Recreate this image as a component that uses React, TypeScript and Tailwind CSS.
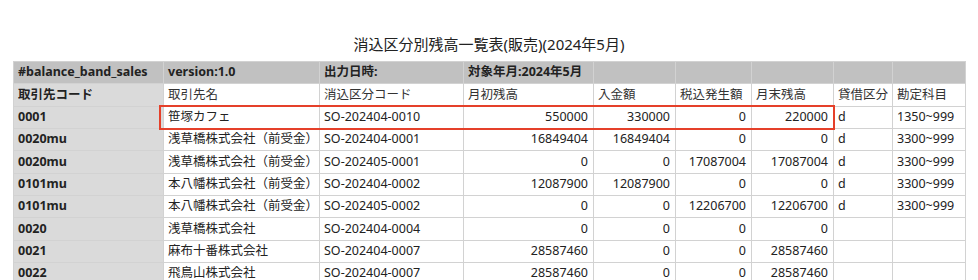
const widths = [150, 156, 144, 130, 82, 76, 82, 59, 73];

type Row = [string, string, string, string, string, string, string, string, string];

const rows: Row[] = [
  ["0001", "笹塚カフェ", "SO-202404-0010", "550000", "330000", "0", "220000", "d", "1350~999"],
  ["0020mu", "浅草橋株式会社（前受金）", "SO-202404-0001", "16849404", "16849404", "0", "0", "d", "3300~999"],
  ["0020mu", "浅草橋株式会社（前受金）", "SO-202405-0001", "0", "0", "17087004", "17087004", "d", "3300~999"],
  ["0101mu", "本八幡株式会社（前受金）", "SO-202404-0002", "12087900", "12087900", "0", "0", "d", "3300~999"],
  ["0101mu", "本八幡株式会社（前受金）", "SO-202405-0002", "0", "0", "12206700", "12206700", "d", "3300~999"],
  ["0020", "浅草橋株式会社", "SO-202404-0004", "0", "0", "0", "0", "", ""],
  ["0021", "麻布十番株式会社", "SO-202404-0007", "28587460", "0", "0", "28587460", "", ""],
  ["0022", "飛鳥山株式会社", "SO-202404-0007", "28587460", "0", "0", "28587460", "", ""],
];

const labels = ["取引先コード", "取引先名", "消込区分コード", "月初残高", "入金額", "税込発生額", "月末残高", "貸借区分", "勘定科目"];

const meta = ["#balance_band_sales", "version:1.0", "出力日時:", "対象年月:2024年5月", "", "", "", "", ""];

const cell = "h-[22.33px] border border-[#d2d2d2] px-[4px] py-0 whitespace-nowrap";

export default function App() {
  return (
    <div
      className="min-h-screen bg-white pt-[33px] text-[#222]"
      style={{ fontFamily: '"Noto Sans", "Noto Sans CJK JP", sans-serif' }}
    >
      <h1 className="text-center text-[15px] leading-[22px] font-normal">
        消込区分別残高一覧表(販売)(2024年5月)
      </h1>
      <div className="relative mx-auto mt-[6px] w-[952px]">
        <table className="w-[952px] table-fixed border-collapse text-[12.5px] leading-none">
          <colgroup>
            {widths.map((w, i) => (
              <col key={i} style={{ width: w }} />
            ))}
          </colgroup>
          <tbody>
            <tr className="bg-[#c1c1c1] font-bold">
              {meta.map((t, i) => (
                <td key={i} className={cell}>
                  {t}
                </td>
              ))}
            </tr>
            <tr>
              {labels.map((t, i) => (
                <td
                  key={i}
                  className={i === 0 ? `${cell} bg-[#dadada] font-bold` : `${cell} text-[#333]`}
                >
                  {t}
                </td>
              ))}
            </tr>
            {rows.map((r, ri) => (
              <tr key={ri}>
                {r.map((t, i) => (
                  <td
                    key={i}
                    className={
                      i === 0
                        ? `${cell} bg-[#dadada] font-bold`
                        : i >= 3 && i <= 6
                          ? `${cell} pr-[5px] text-right`
                          : cell
                    }
                  >
                    {t}
                  </td>
                ))}
              </tr>
            ))}
          </tbody>
        </table>
        {/* highlight box */}
        <div className="pointer-events-none absolute top-[44px] left-[146px] h-[25px] w-[676px] border-2 border-[#e5402a]" />
      </div>
    </div>
  );
}
